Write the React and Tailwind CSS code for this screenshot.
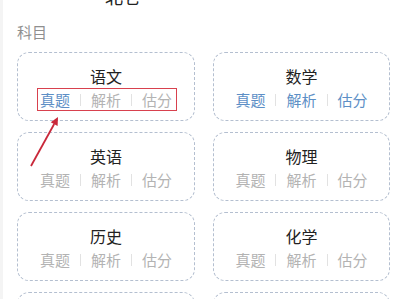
import React from 'react';

const subjects = [
    { name: '语文', blue: [true, false, false] },
    { name: '数学', blue: [true, true, true] },
    { name: '英语', blue: [false, false, false] },
    { name: '物理', blue: [false, false, false] },
    { name: '历史', blue: [false, false, false] },
    { name: '化学', blue: [false, false, false] },
    { name: '生物', blue: [false, false, false] },
    { name: '地理', blue: [false, false, false] },
];

const links = ['真题', '解析', '估分'];

function SubjectCard({ subject, marked }) {
    return (
        <div className="relative h-[69px] rounded-[12px] border border-dashed border-[#b4bfd0] bg-white flex flex-col items-center">
            <div className="mt-[11px] text-[16px] leading-[24px] text-[#222]">{subject.name}</div>
            <div className="relative mt-[1px] flex items-center text-[15px] leading-[22px]">
                {links.map((l, i) => (
                    <React.Fragment key={l}>
                        {i > 0 && <span className="mx-[10px] h-[12px] w-px bg-[#e2e2e2]" />}
                        <span className={subject.blue[i] ? 'text-[#5d8fc6]' : 'text-[#b3b3b3]'}>{l}</span>
                    </React.Fragment>
                ))}
                {marked && (
                    <div className="absolute -left-[3px] -right-[5px] -top-[1px] -bottom-[0px] border-[1.5px] border-[#d8414e]" />
                )}
            </div>
        </div>
    );
}

export default function App() {
    return (
        <div className="relative w-[400px] h-[299px] overflow-hidden bg-white font-['Noto_Sans_CJK_SC',sans-serif]">
            <div className="absolute left-0 top-0 bottom-0 w-[3px] bg-[#f4f4f4]" />
            <div className="h-[6px] overflow-hidden pl-[105px]">
                <div className="-mt-[15px] text-[18px] leading-[22px] text-[#222]">北仑</div>
            </div>
            <div className="mt-[15px] pl-[17px] text-[15px] leading-[22px] text-[#8f8f8f]">科目</div>
            <div className="mt-[9px] pl-[17px] grid grid-cols-[178px_177px] gap-x-[18px] gap-y-[11px]">
                {subjects.map((s, i) => (
                    <SubjectCard key={s.name} subject={s} marked={i === 0} />
                ))}
            </div>
            <svg className="absolute left-0 top-0" width="400" height="299" viewBox="0 0 400 299">
                <line x1="31" y1="166" x2="54.2" y2="124" stroke="#c9283a" strokeWidth="1.8" />
                <polygon points="58,117 57.6,126 50.8,122.2" fill="#c9283a" />
            </svg>
        </div>
    );
}
